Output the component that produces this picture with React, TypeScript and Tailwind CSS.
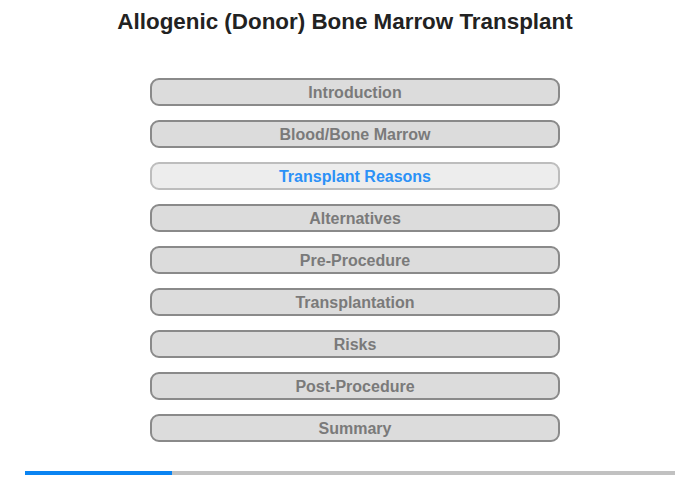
const items = [
  "Introduction",
  "Blood/Bone Marrow",
  "Transplant Reasons",
  "Alternatives",
  "Pre-Procedure",
  "Transplantation",
  "Risks",
  "Post-Procedure",
  "Summary",
];

export default function App() {
  const active = 2;
  return (
    <div className="w-[700px] h-[480px] bg-white font-['Liberation_Sans',Arial,sans-serif] overflow-hidden">
      <h1 className="pt-[9px] pr-[10px] text-center text-[22.4px] leading-[26px] font-bold text-[#222]">
        Allogenic (Donor) Bone Marrow Transplant
      </h1>
      <div className="mt-[43px] ml-[150px] w-[410px] flex flex-col gap-[14px]">
        {items.map((label, i) => (
          <div
            key={label}
            className={
              i === active
                ? "h-[28px] pt-px rounded-[9px] border-2 border-[#bdbdbd] bg-[#ededed] flex items-center justify-center text-[16px] font-bold text-[#2b91f7]"
                : "h-[28px] pt-px rounded-[9px] border-2 border-[#8a8a8a] bg-[#dcdcdc] flex items-center justify-center text-[16px] font-bold text-[#7a7a7a]"
            }
          >
            {label}
          </div>
        ))}
      </div>
      <div className="mt-[29px] ml-[25px] w-[650px] h-[4px] bg-[#c1c1c1] flex">
        <div className="w-[147px] h-full bg-[#0a84f2]" />
      </div>
    </div>
  );
}
